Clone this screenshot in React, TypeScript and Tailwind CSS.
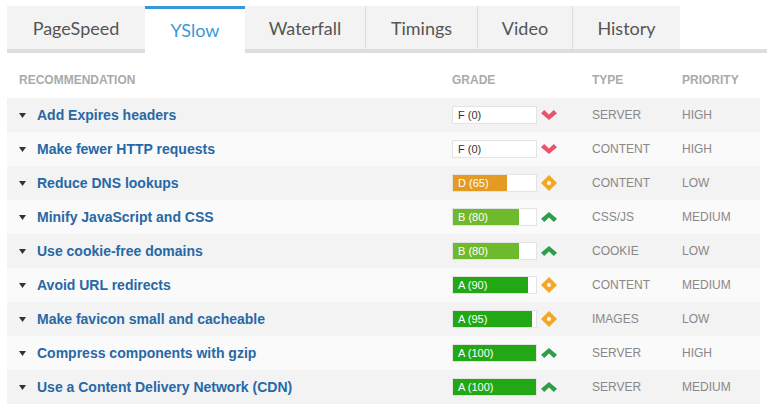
import React from "react";

const tabs = [
  { name: "PageSpeed", w: "w-[138px]" },
  { name: "YSlow", w: "w-[100px]", active: true },
  { name: "Waterfall", w: "w-[121px]" },
  { name: "Timings", w: "w-[112px]" },
  { name: "Video", w: "w-[95px]" },
  { name: "History", w: "w-[107px]" },
];

type Row = {
  title: string;
  grade: string;
  pct: number;
  color: string;
  icon: "down" | "up" | "diamond";
  type: string;
  priority: string;
};

const rows: Row[] = [
  { title: "Add Expires headers", grade: "F (0)", pct: 0, color: "", icon: "down", type: "SERVER", priority: "HIGH" },
  { title: "Make fewer HTTP requests", grade: "F (0)", pct: 0, color: "", icon: "down", type: "CONTENT", priority: "HIGH" },
  { title: "Reduce DNS lookups", grade: "D (65)", pct: 65, color: "bg-[#e59a22]", icon: "diamond", type: "CONTENT", priority: "LOW" },
  { title: "Minify JavaScript and CSS", grade: "B (80)", pct: 80, color: "bg-[#6fba2c]", icon: "up", type: "CSS/JS", priority: "MEDIUM" },
  { title: "Use cookie-free domains", grade: "B (80)", pct: 80, color: "bg-[#6fba2c]", icon: "up", type: "COOKIE", priority: "LOW" },
  { title: "Avoid URL redirects", grade: "A (90)", pct: 90, color: "bg-[#22a815]", icon: "diamond", type: "CONTENT", priority: "MEDIUM" },
  { title: "Make favicon small and cacheable", grade: "A (95)", pct: 95, color: "bg-[#22a815]", icon: "diamond", type: "IMAGES", priority: "LOW" },
  { title: "Compress components with gzip", grade: "A (100)", pct: 100, color: "bg-[#22a815]", icon: "up", type: "SERVER", priority: "HIGH" },
  { title: "Use a Content Delivery Network (CDN)", grade: "A (100)", pct: 100, color: "bg-[#22a815]", icon: "up", type: "SERVER", priority: "MEDIUM" },
];

function Icon({ kind }: { kind: Row["icon"] }) {
  if (kind === "down")
    return (
      <svg width="16" height="10" viewBox="0 0 16 10">
        <path d="M0 3.2 L3.2 0 L8 4.6 L12.8 0 L16 3.2 L8 10 Z" fill="#e9546b" />
      </svg>
    );
  if (kind === "up")
    return (
      <svg width="16" height="10" viewBox="0 0 16 10">
        <path d="M0 6.8 L3.2 10 L8 5.4 L12.8 10 L16 6.8 L8 0 Z" fill="#2f9c4a" />
      </svg>
    );
  return (
    <svg width="16" height="16" viewBox="0 0 16 16">
      <path d="M8 0 L16 8 L8 16 L0 8 Z" fill="#f5a623" />
      <circle cx="8" cy="8" r="2" fill="#fff" />
    </svg>
  );
}

export default function App() {
  return (
    <div className="w-[767px] h-[412px] bg-white overflow-hidden font-['Liberation_Sans',Arial,sans-serif]">
      <div className="pt-[6px] pl-[7px]">
        <div className="flex h-[47px] border-b-4 border-[#dedede]">
          {tabs.map((t, i) =>
            t.active ? (
              <div
                key={t.name}
                className={`${t.w} h-[47px] bg-white border-t-[3px] border-[#3498db] flex items-center justify-center text-[18px] text-[#3a97d6] font-['Lato',sans-serif] pb-[2px] relative z-10`}
              >
                {t.name}
              </div>
            ) : (
              <div
                key={t.name}
                className={`${t.w} h-[43px] bg-[#f3f3f3] ${i < tabs.length - 1 && !tabs[i + 1].active ? "border-r border-[#dcdcdc]" : ""} flex items-center justify-center text-[18px] text-[#555] font-['Lato',sans-serif] pt-[1px]`}
              >
                {t.name}
              </div>
            )
          )}
        </div>
      </div>
      <div className="w-[753px] ml-[7px]">
        <div className="grid grid-cols-[445px_140px_90px_78px] h-[45px] items-end pb-[9px] text-[12px] font-bold text-[#aaaaaa]">
          <div className="pl-[12px]">RECOMMENDATION</div>
          <div>GRADE</div>
          <div>TYPE</div>
          <div>PRIORITY</div>
        </div>
        {rows.map((r, i) => (
          <div
            key={r.title}
            className={`grid grid-cols-[445px_140px_90px_78px] h-[34px] items-center ${i % 2 === 0 ? "bg-[#f3f3f3]" : "bg-[#fafafa]"}`}
          >
            <div className="flex items-center pl-[12px]">
              <svg width="7" height="5" viewBox="0 0 7 5" className="mr-[11px]">
                <path d="M0 0 L7 0 L3.5 5 Z" fill="#333" />
              </svg>
              <span className="text-[14px] font-bold text-[#2768a6]">{r.title}</span>
            </div>
            <div className="flex items-center">
              <div className="w-[85px] h-[18px] border border-[#e3e3e3] bg-white relative">
                {r.pct > 0 && (
                  <div className={`absolute left-0 top-0 h-[16px] ${r.color}`} style={{ width: `${(r.pct / 100) * 83}px` }} />
                )}
                <span className={`absolute left-[5px] top-0 h-[16px] flex items-center text-[11px] ${r.pct > 0 ? "text-white" : "text-[#333]"}`}>
                  {r.grade}
                </span>
              </div>
              <div className="w-[16px] ml-[4px] flex items-center justify-center">
                <Icon kind={r.icon} />
              </div>
            </div>
            <div className="text-[12px] text-[#888]">{r.type}</div>
            <div className="text-[12px] text-[#888]">{r.priority}</div>
          </div>
        ))}
      </div>
    </div>
  );
}
